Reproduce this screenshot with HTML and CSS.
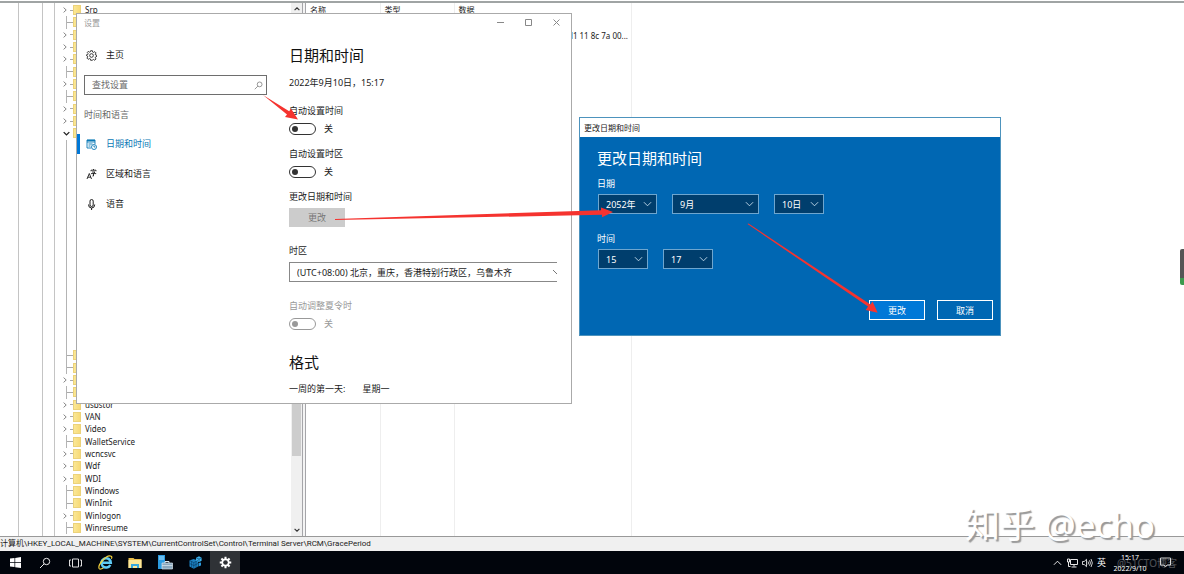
FILE: index.html
```html
<!DOCTYPE html>
<html lang="zh-CN">
<head>
<meta charset="utf-8">
<title>日期和时间</title>
<link rel="stylesheet" href="styles.css">
</head>
<body>
<svg class="defs" aria-hidden="true">
  <symbol id="down" viewBox="0 0 10 6"><path d="M1 1l4 4 4-4" fill="none" stroke="currentColor"/></symbol>
  <symbol id="bold-down" viewBox="0 0 10 6"><path d="M1 1l4 4 4-4" fill="none" stroke="currentColor" stroke-width="1.900"/></symbol>
  <symbol id="right" viewBox="0 0 4 6"><path d="M.6.6L3.2 3 .6 5.4" fill="none" stroke="currentColor" stroke-width=".9"/></symbol>
  <symbol id="gear" viewBox="0 0 12 12"><path d="M5 .8h2l.3 1.5 1 .4 1.3-.9 1.4 1.4-.9 1.3.4 1 1.5.3v1l-1.5.7-.4 1 .9 1.3-1.4 1.4-1.3-.9-1 .4L7 11.2H5l-.3-1.5-1-.4-1.3.9L1 8.8l.9-1.3-.4-1L.4 6V5.300l1.500-.3.4-1-.9-1.300L2.400 1.500l1.300.900 1-.4z" fill="none" stroke="currentColor" stroke-width=".9"/><circle cx="6" cy="6" r="2" fill="none" stroke="currentColor" stroke-width=".9"/></symbol>
  <symbol id="search" viewBox="0 0 12 12"><circle cx="7.500" cy="4.500" r="3.200" fill="none" stroke="currentColor"/><path d="M5.200 6.800L1 11" stroke="currentColor"/></symbol>
</svg>

<main class="desktop">
  <section class="registry" aria-label="注册表编辑器">
    <div class="panes">
      <div class="tree">
        <div class="guide g1"></div><div class="guide g2"></div><div class="guide g3"></div>
        <ul class="nodes" id="nodes"></ul>
      </div>
      <div class="scroll"><svg class="chev up"><use href="#bold-down"/></svg><div class="thumb"></div><svg class="chev"><use href="#bold-down"/></svg></div>
      <div class="splitter"></div>
      <div class="values">
        <table>
          <thead><tr><th class="c1">名称</th><th class="c2">类型</th><th class="c3">数据</th></tr></thead>
          <tbody>
            <tr class="blank"><td></td><td></td><td></td></tr>
            <tr class="data"><td></td><td></td><td>d1 11 8c 7a 00...</td></tr>
            <tr class="rest"><td></td><td></td><td></td></tr>
          </tbody>
        </table>
      </div>
    </div>
    <div class="status">计算机\HKEY_LOCAL_MACHINE\SYSTEM\CurrentControlSet\Control\Terminal Server\RCM\GracePeriod</div>
  </section>

  <footer class="taskbar">
    <button aria-label="开始"><svg width="11" height="11" viewBox="0 0 11 11"><path d="M0 1.600l4.500-.6v4.200H0zM5.200.9L11 0v5.200H5.200zM0 5.900h4.500v4.200L0 9.500zM5.200 5.900H11V11l-5.800-.8z" fill="#fff"/></svg></button>
    <button aria-label="搜索"><svg width="12" height="12"><use href="#search"/></svg></button>
    <button aria-label="任务视图"><svg width="13" height="10" viewBox="0 0 13 10" fill="none" stroke="#ddd"><path d="M3.500 1h6v8h-6zM2 2H.5v6H2M11 2h1.500v6H11"/></svg></button>
    <button aria-label="Internet Explorer"><svg width="15" height="15" viewBox="0 0 15 15" fill="none"><path d="M12.300 10a4.700 4.700 0 1 1 .5-2.300H4.500" stroke="#5ecbf5" stroke-width="2.500"/><path d="M1.300 13.700C-.8 10.500 8-.8 13.200 1.200c.9.400.7 1.500.2 2.500M1.300 13.700c.9.700 2.500.2 4-.7" stroke="#f5d33c" stroke-width="1.200"/></svg></button>
    <button aria-label="文件资源管理器"><svg width="14" height="12" viewBox="0 0 14 12"><path d="M.5 1h5l1 1h7v9H.5z" fill="#e9bd4b"/><path d="M.5 3h13v8H.5z" fill="#fbe69a"/><path d="M3 11V7h8v4H9V9H5v2z" fill="#38a7df"/></svg></button>
    <button aria-label="服务器管理器"><svg width="16" height="15" viewBox="0 0 16 15"><path d="M1 0h7v14H1z" fill="#2b9be0"/><path d="M2 2h5M2 4h5" stroke="#a9defc"/><path d="M8 8V6.500h4V8" fill="none" stroke="#dce8ef"/><path d="M5 8h10.500v6H5z" fill="#8aa9bf" stroke="#d5e3ec" stroke-width=".7"/><path d="M5 10.500h10.500" stroke="#dce8ef" stroke-width=".7"/></svg></button>
    <button aria-label="注册表编辑器"><svg width="13" height="13" viewBox="0 0 13 13"><path d="M.5 4.500L4.500 3 9 4.500v6L4.800 12.700.5 10.500z" fill="#1d83c4"/><path d="M7 1.700L10 .3 12.600 1.700v3L10 6.300 7 4.700z" fill="#3fb4ee"/><path d="M9.500 7l2.500-.5v3l-2.500 1z" fill="#2b9be0"/><path d="M.5 4.500l4.300 2L9 4.500M4.800 6.500v6M2.600 5.500v6M7 5.500v6M.5 7.500l4.300 2L9 7.500M7 1.700l3 1.400 2.600-1.400M10 3.100v3" fill="none" stroke="#06355c" stroke-width=".6"/></svg></button>
    <button class="active" aria-label="设置"><svg width="13" height="13" viewBox="0 0 14 14"><g stroke="#fff" stroke-width="2.200"><path d="M7 .8v12.400M.8 7h12.400M2.600 2.600l8.800 8.800M11.400 2.600l-8.800 8.800"/></g><circle cx="7" cy="7" r="4.300" fill="#fff"/><circle cx="7" cy="7" r="2.500" fill="#2f3236"/></svg></button>
    <div class="tray">
      <svg class="chev up" ><use href="#down"/></svg>
      <svg width="11" height="10" viewBox="0 0 11 10" fill="none" stroke="#fff" stroke-width=".9"><path d="M3.500 1.500h7v5h-7zM7 6.500v2M4.500 9h5M.5 1h2v3h-2zM1.500 4v4.500h2"/></svg>
      <svg width="11" height="10" viewBox="0 0 11 10" fill="none" stroke="#fff" stroke-width=".8"><path d="M.5 3.500h1.700L4.500 1.300v7.400L2.200 6.500H.5zM6 3.500q1 1.500 0 3M7.500 2.300q1.900 2.700 0 5.400M9 1q2.700 4 0 8"/></svg>
      <span class="ime">英</span>
      <time>15:17<br>2022/9/10</time>
      <svg class="note" width="11" height="11" viewBox="0 0 11 11" fill="none" stroke="#ccc"><path d="M.5 1h10v7H7L5.500 10 4 8H.5z"/></svg>
    </div>
  </footer>
  <div class="side-thumb"></div>

  <section class="settings" aria-label="设置">
    <header class="titlebar"><span>设置</span>
      <div class="win-controls">
        <button aria-label="最小化"><svg width="7" height="7"><path d="M0 3.500h7" stroke="#888"/></svg></button>
        <button aria-label="最大化"><svg width="7" height="7"><path d="M.5.5h6v6h-6z" fill="none" stroke="#888"/></svg></button>
        <button aria-label="关闭"><svg width="7" height="7"><path d="M.5.5l6 6M6.500.5l-6 6" stroke="#888"/></svg></button>
      </div>
    </header>
    <div class="body">
      <nav>
        <a class="home" href="#"><svg width="11" height="11"><use href="#gear"/></svg>主页</a>
        <label class="search"><input type="text" placeholder="查找设置" aria-label="查找设置"><svg width="9" height="9"><use href="#search"/></svg></label>
        <p class="group">时间和语言</p>
        <a class="current" href="#"><svg width="11" height="11" viewBox="0 0 11 11" fill="none" stroke="currentColor" stroke-width=".9"><path d="M5 9H1V1h8v4M1 3h8M2.500 5h4M2.500 7h2"/><path d="M1 1.500h8" stroke-width="1.500"/><circle cx="8" cy="8" r="2.500"/><path d="M8 6.500V8h1.300"/></svg>日期和时间</a>
        <a href="#"><svg width="11" height="11" viewBox="0 0 11 11" fill="none" stroke="currentColor" stroke-width=".9"><path d="M1 10l2.300-5.500L5.500 10M1.800 8.200h3M5 2.300V1.200h5v1.100M7.500 0v1.200M6 3h3L7.500 4.300V7H6.500M5 4.600h5.200"/></svg>区域和语言</a>
        <a href="#"><svg width="11" height="11" viewBox="0 0 11 11" fill="none" stroke="currentColor"><rect x="4" y=".5" width="3.200" height="7" rx="1.600"/><path d="M2.500 5.500q0 3.500 3.100 3.500t3.100-3.500M5.600 9v2"/></svg>语音</a>
      </nav>
      <div class="content">
        <h1>日期和时间</h1>
        <p class="now">2022年9月10日，15:17</p>
        <div class="field"><label for="auto-time">自动设置时间</label>
          <div class="switch"><input type="checkbox" role="switch" id="auto-time"><span>关</span></div></div>
        <div class="field"><label for="auto-zone">自动设置时区</label>
          <div class="switch"><input type="checkbox" role="switch" id="auto-zone"><span>关</span></div></div>
        <div class="field"><label for="change">更改日期和时间</label><button class="change" id="change">更改</button></div>
        <div class="field wide"><label for="zone">时区</label>
          <div class="zone"><select id="zone"><option>(UTC+08:00) 北京，重庆，香港特别行政区，乌鲁木齐</option></select><svg width="4" height="6" viewBox="0 0 4 6"><path d="M0 1l4 4" stroke="#777"/></svg></div></div>
        <div class="field wide off"><label for="dst">自动调整夏令时</label>
          <div class="switch"><input type="checkbox" role="switch" id="dst" disabled><span>关</span></div></div>
        <h1 class="format">格式</h1>
        <dl><dt>一周的第一天:</dt><dd>星期一</dd></dl>
      </div>
    </div>
  </section>

  <section class="dialog" role="dialog" aria-label="更改日期和时间">
    <header>更改日期和时间</header>
    <form>
      <h2>更改日期和时间</h2>
      <fieldset><legend>日期</legend>
        <div class="picks">
          <span class="pick year"><select aria-label="年"><option>2052年</option></select><svg><use href="#down"/></svg></span>
          <span class="pick month"><select aria-label="月"><option>9月</option></select><svg><use href="#down"/></svg></span>
          <span class="pick"><select aria-label="日"><option>10日</option></select><svg><use href="#down"/></svg></span>
        </div></fieldset>
      <fieldset class="time"><legend>时间</legend>
        <div class="picks">
          <span class="pick"><select aria-label="时"><option>15</option></select><svg><use href="#down"/></svg></span>
          <span class="pick"><select aria-label="分"><option>17</option></select><svg><use href="#down"/></svg></span>
        </div></fieldset>
      <div class="actions"><button type="button" class="primary">更改</button><button type="button">取消</button></div>
    </form>
  </section>

  <svg class="arrows" width="1184" height="574" viewBox="0 0 1184 574" fill="#f5332f" aria-hidden="true">
    <path d="M263 95l24 19.500-2 2.500 13 2.500-7-11-1.800 2.700z"/>
    <path d="M335 218.900L601 210.300v-2.800l12 4.500-11 5.300v-2.500L335 220z"/>
    <path d="M747.500 224L868 306.500l-2.300 3.500 12 2.700-5.200-11.200-2 3L748.500 223.500z"/>
  </svg>
  <div class="mark zhihu">知乎 @echo</div>
  <div class="mark cto">@51CTO博客</div>
</main>
<script src="tree.js"></script>
</body>
</html>
```
FILE: styles.css
```css
* { box-sizing: border-box; }
body, h1, h2, p, ul, dl, dd, fieldset { margin: 0; padding: 0; }
body, button, input, select { font-family: "Noto Sans", "Noto Sans CJK SC", sans-serif; }
body { background: #fff; color: #1a1a1a; font-size: 9px; line-height: 14px; }
button, input, select { font-size: 9px; border-radius: 0; }
svg { flex: none; }
a { text-decoration: none; color: inherit; }
.defs { display: none; }

.desktop { position: relative; display: flex; flex-direction: column; height: 100vh; overflow: hidden; }
.registry { flex: 1; min-height: 0; display: flex; flex-direction: column; font-size: 8px; padding-top: 1px; }
.panes { flex: 1; min-height: 0; display: flex; border-top: 2px solid #a0a4a4; border-bottom: 1px solid #999; }
.tree { flex: none; width: 291px; display: flex; }
.guide { border-right: 1px solid #c4c4c4; }
.g1 { width: 19px; }
.g2 { width: 24px; }
.g3 { width: 12px; }
.nodes { flex: 1; display: flex; flex-direction: column; list-style: none; padding: 1px 0 2px 8px; }
.nodes li { flex: 1; min-height: 0; display: flex; align-items: center; line-height: 12px; color: #222; }
.toggle { width: 10px; height: 100%; display: flex; align-items: center; color: #777; }
.toggle svg { width: 4px; height: 6px; }
.toggle svg.open { width: 7px; height: 5px; color: #222; }
.leaf .toggle, .deep .toggle { margin-left: 3px; width: 7px; border-left: 1px solid #b4b4b4; }
.toggle::after { content: ""; width: 3px; height: 1px; margin-left: 3px; background: #aaa; }
.leaf .toggle::after { width: 6px; margin-left: 0; }
.deep .toggle::after { display: none; }
.folder { width: 8px; height: 10px; margin-right: 4px; background: linear-gradient(90deg, #fae795, #f7da78); border: 1px solid #ecd27a; }
.scroll { width: 11px; background: #f0f0f0; display: flex; flex-direction: column; align-items: center; padding: 4px 0; color: #333; }
.scroll .chev { width: 6px; height: 4px; }
.thumb { width: 9px; flex: 1; margin: 4px 0 72px; background: #cdcdcd; }
.up { transform: rotate(180deg); }
.splitter { width: 4px; background: #f4f4f4; border: solid #a5a5a9; border-width: 0 1px; }
.values { flex: 1; }
.values table { height: 100%; border-collapse: collapse; table-layout: fixed; width: 326px; }
.values th, .values td { padding: 0 4px; border-right: 1px solid #eee; font-weight: 400; text-align: left; height: 14px; line-height: 12px; }
.c1 { width: 74px; }
.c2 { width: 74px; }
.values .blank td { height: 12px; }
.values .data td { height: 14px; text-align: right; padding-right: 3px; }
.values .rest td { height: 100%; }
.status { height: 14px; background: #f0f0f0; font-family: Roboto, "Noto Sans CJK SC", sans-serif; line-height: 14px; white-space: nowrap; }

.taskbar { height: 23px; display: flex; background: #01050c; color: #fff; }
.taskbar button { width: 30px; padding: 0; border: 0; background: none; color: #eee; display: flex; align-items: center; justify-content: center; }
.taskbar .active { background: #2f3236; }
.tray { margin-left: auto; display: flex; align-items: center; gap: 4px; padding-right: 13px; }
.tray .chev { width: 9px; height: 6px; margin-right: 1px; }
.tray time { font-size: 7px; line-height: 11px; text-align: center; width: 38px; margin-left: 1px; }
.note { margin-left: 7px; }
.side-thumb { position: absolute; right: 0; top: 249px; width: 4px; height: 36px; border-radius: 2px 0 0 2px; background: #555; border-bottom: 7px solid #3c9a4e; }

.settings { position: absolute; left: 76px; top: 13px; width: 496px; height: 391px; background: #fff; border: 1px solid #aaa; overflow: hidden; }
.titlebar { height: 17px; display: flex; justify-content: space-between; align-items: center; padding: 0 11px 0 7px; font-size: 8px; color: #999; }
.win-controls { display: flex; gap: 21px; }
.win-controls button { padding: 0; border: 0; background: none; width: 7px; height: 7px; display: flex; }
nav { width: 190px; flex: none; }
.body { display: flex; }
nav a { display: flex; align-items: center; gap: 9px; height: 20px; margin-bottom: 10px; padding-left: 9px; }
nav .home { margin: 14px 0 10px; }
nav .current { color: #0a78b5; border-left: 3px solid #0078d7; padding-left: 6px; }
.search { position: relative; display: block; margin-left: 7px; }
.search input { width: 100%; height: 20px; border: 1px solid #6e6e6e; padding: 0 7px 1px; display: block; }
.search input::placeholder { color: #6b6b6b; }
.search svg { position: absolute; right: 4px; top: 6px; color: #777; }
.group { color: #666; padding-left: 7px; margin: 13px 0 12px; }
.content { flex: 1; padding: 12px 14px 8px 22px; }
h1, h2 { font-size: 15px; line-height: 24px; font-weight: 400; color: #111; }
.now { margin: 9px 0 14px; }
.field { margin-bottom: 11px; }
.field.wide { margin-top: 17px; }
.field label { display: block; margin-bottom: 4px; }
.switch { display: flex; align-items: center; gap: 8px; height: 14px; }
.switch input { appearance: none; width: 27px; height: 12px; margin: 0; border: 1px solid #333; border-radius: 6px; display: flex; align-items: center; padding-left: 2px; }
.switch input::before { content: ""; width: 6px; height: 6px; border-radius: 50%; background: #333; }
.off { color: #999; }
.off input { border-color: #999; }
.off input::before { background: #999; }
.change { display: block; width: 56px; height: 19px; padding: 0; border: 0; background: #ccc; color: #777; }
.zone { position: relative; }
.zone select { appearance: none; display: block; width: 100%; height: 20px; border: 1px solid #888; border-right: 0; background: #fff; color: #1a1a1a; padding: 0 7px; }
.zone svg { position: absolute; right: 0; top: 7px; }
.format { margin-top: 19px; }
dl { display: flex; gap: 17px; margin-top: 8px; }

.dialog { position: absolute; left: 579px; top: 117px; width: 422px; height: 219px; display: flex; flex-direction: column; border: 1px solid #4d93bd; background: #0067b3; color: #fff; }
.dialog header { height: 19px; background: #fff; color: #222; font-size: 8px; line-height: 19px; padding-left: 4px; }
.dialog form { flex: 1; display: flex; flex-direction: column; padding: 9px 7px 15px 17px; }
.dialog h2 { color: #fff; }
fieldset { border: 0; margin-top: 7px; }
legend { padding: 0; }
.time { margin-top: 18px; }
.picks { display: flex; gap: 15px; padding: 3px 0 0 1px; }
.pick { position: relative; width: 50px; }
.year { width: 59px; }
.month { width: 87px; }
.pick select { appearance: none; display: block; width: 100%; height: 20px; border: 1px solid #6ea6cf; background: #003e6d; color: #fff; padding: 0 7px; }
.pick svg { position: absolute; right: 5px; top: 7px; width: 9px; height: 6px; color: #c5dcec; pointer-events: none; }
.actions { margin-top: auto; display: flex; justify-content: flex-end; gap: 12px; }
.actions button { width: 56px; height: 20px; padding: 0; border: 1px solid #fff; background: none; color: #fff; }
.actions .primary { background: #0078d7; }

.arrows { position: absolute; left: 0; top: 0; pointer-events: none; }
.mark { position: absolute; white-space: nowrap; pointer-events: none; }
.zhihu { right: 29px; bottom: 28px; font-size: 35px; line-height: 42px; color: #fff; text-shadow: 2px 2px 1px #999; }
.cto { right: 7px; bottom: 4px; font-size: 10px; color: #fff; opacity: .3; }
```
FILE: tree.js
```js
// Registry keys in display order: [kind, label]; kinds are closed, leaf, open and deep.
const keys = [
  ['closed', 'Srp'], ['leaf'], ['closed'], ['closed'], ['closed'], ['leaf'], ['closed'], ['leaf'],
  ['closed'], ['closed'], ['open'],
  ...Array.from({ length: 17 }, () => ['deep']),
  ['leaf'], ['leaf'], ['closed'], ['leaf'], ['closed', 'usbstor'], ['closed', 'VAN'],
  ['closed', 'Video'], ['leaf', 'WalletService'], ['closed', 'wcncsvc'], ['closed', 'Wdf'],
  ['closed', 'WDI'], ['leaf', 'Windows'], ['leaf', 'WinInit'], ['closed', 'Winlogon'], ['leaf', 'Winresume']
];
const arrows = {
  closed: '<svg><use href="#right"/></svg>',
  open: '<svg class="open"><use href="#bold-down"/></svg>'
};
document.getElementById('nodes').innerHTML = keys.map(([kind, label = '']) =>
  `<li class="${kind}"><span class="toggle">${arrows[kind] || ''}</span>` +
  (kind === 'deep' ? '' : '<span class="folder"></span>') + `${label}</li>`).join('');
```
